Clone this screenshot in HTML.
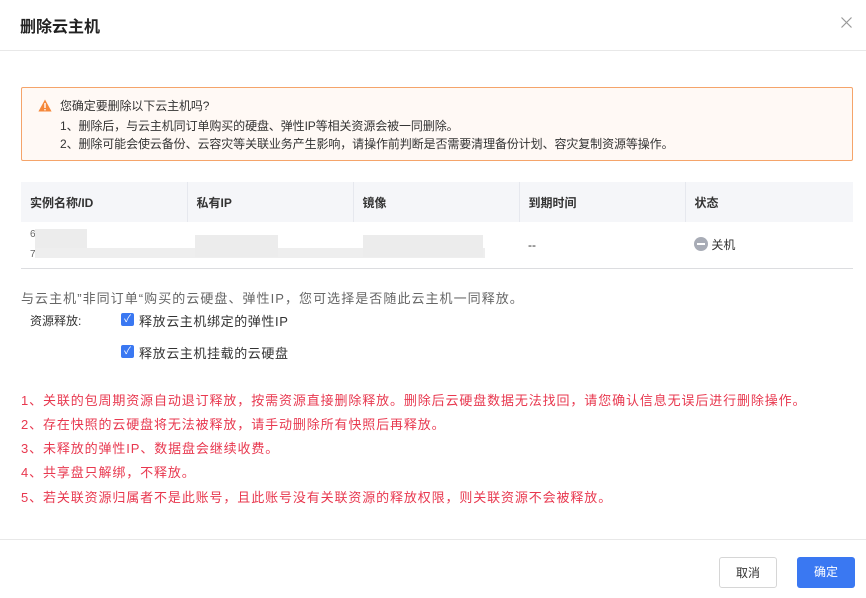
<!DOCTYPE html><html><head><meta charset="utf-8"><style>
*{margin:0;padding:0;box-sizing:border-box}
body{width:866px;height:598px;background:#fff;font-family:"Liberation Sans","Noto Sans CJK SC",sans-serif;position:relative;overflow:hidden;color:#333}
.a{position:absolute;white-space:nowrap}
.title{left:20px;top:13px;font-size:16px;font-weight:bold;color:#222}
.warn{left:21px;top:87px;width:832px;height:74px;border:1px solid #f5a46a;background:#fff9f5;border-radius:2px}
.warn div{position:absolute;font-size:12px;color:#333;letter-spacing:-0.1px}
table{position:absolute;left:21px;top:182px;width:832px;border-collapse:collapse;font-size:12px}
th{background:#f5f6f9;height:40px;text-align:left;padding-left:9px;font-weight:bold;color:#333;border-right:1px solid #e6e8ee}
th:last-child{border-right:none}
td{height:46px;border-bottom:1px solid #dcdde0;padding-left:9px}
.g{position:absolute;background:#ececec}
.cb{position:absolute;width:13px;height:13px;background:#3a78f2;border-radius:2px;color:#fff;font-size:10px;line-height:13px;text-align:center}
.red{left:21px;font-size:13px;color:#e8384f;letter-spacing:0.88px}
.btn{position:absolute;top:557px;height:31px;border-radius:3px;font-size:12px;text-align:center;line-height:31px}
</style></head><body>
<div class="a title">删除云主机</div>
<svg class="a" style="left:841px;top:17px" width="11" height="11" viewBox="0 0 11 11"><path d="M0.5 0.5L10.5 10.5M10.5 0.5L0.5 10.5" stroke="#999" stroke-width="1.2"/></svg>
<div class="a" style="left:0;top:50px;width:866px;height:1px;background:#e8e8e8"></div>
<div class="a warn">
<svg style="position:absolute;left:16px;top:11px" width="14" height="13" viewBox="0 0 14 13"><path d="M7 0.5L13.6 12.5H0.4Z" fill="#f5883a"/><rect x="6.3" y="4" width="1.4" height="5" fill="#fff"/><rect x="6.3" y="10" width="1.4" height="1.4" fill="#fff"/></svg>
<div style="left:38px;top:9px">您确定要删除以下云主机吗?</div>
<div style="left:38px;top:29px">1、删除后，与云主机同订单购买的硬盘、弹性IP等相关资源会被一同删除。</div>
<div style="left:38px;top:47px">2、删除可能会使云备份、云容灾等关联业务产生影响，请操作前判断是否需要清理备份计划、容灾复制资源等操作。</div>
</div>
<table><tr><th style="width:166px">实例名称/ID</th><th style="width:166px">私有IP</th><th style="width:166px">镜像</th><th style="width:166px">到期时间</th><th>状态</th></tr>
<tr><td style="font-size:10px;color:#666;line-height:20px">6<br>7</td><td></td><td></td><td>--</td><td><span style="display:inline-block;width:14px;height:14px;border-radius:50%;background:#a8acb6;vertical-align:-2px;position:relative"><span style="position:absolute;left:3px;top:6px;width:8px;height:2px;background:#fff"></span></span> 关机</td></tr></table>
<div class="g" style="left:35px;top:229px;width:52px;height:28px"></div>
<div class="g" style="left:35px;top:248px;width:450px;height:10px;background:#eeeeee"></div>
<div class="g" style="left:195px;top:235px;width:83px;height:22px"></div>
<div class="g" style="left:363px;top:235px;width:120px;height:22px"></div>
<div class="a" style="left:21px;top:288px;font-size:13px;color:#666;letter-spacing:1.05px">与云主机”非同订单“购买的云硬盘、弹性IP，您可选择是否随此云主机一同释放。</div>
<div class="a" style="left:30px;top:312px;font-size:12px;color:#333">资源释放:</div>
<div class="cb" style="left:121px;top:313px">✓</div>
<div class="a" style="left:139px;top:311px;font-size:13px;color:#333;letter-spacing:0.6px">释放云主机绑定的弹性IP</div>
<div class="cb" style="left:121px;top:345px">✓</div>
<div class="a" style="left:139px;top:343px;font-size:13px;color:#333;letter-spacing:0.6px">释放云主机挂载的云硬盘</div>
<div class="a red" style="top:390px">1、关联的包周期资源自动退订释放，按需资源直接删除释放。删除后云硬盘数据无法找回，请您确认信息无误后进行删除操作。</div>
<div class="a red" style="top:414px">2、存在快照的云硬盘将无法被释放，请手动删除所有快照后再释放。</div>
<div class="a red" style="top:438px">3、未释放的弹性IP、数据盘会继续收费。</div>
<div class="a red" style="top:462px">4、共享盘只解绑，不释放。</div>
<div class="a red" style="top:487px">5、若关联资源归属者不是此账号，且此账号没有关联资源的释放权限，则关联资源不会被释放。</div>
<div class="a" style="left:0;top:539px;width:866px;height:1px;background:#e8e8e8"></div>
<div class="btn" style="left:719px;width:58px;border:1px solid #d6d6d6;color:#333">取消</div>
<div class="btn" style="left:797px;width:58px;background:#3a78f2;color:#fff">确定</div>
</body></html>
